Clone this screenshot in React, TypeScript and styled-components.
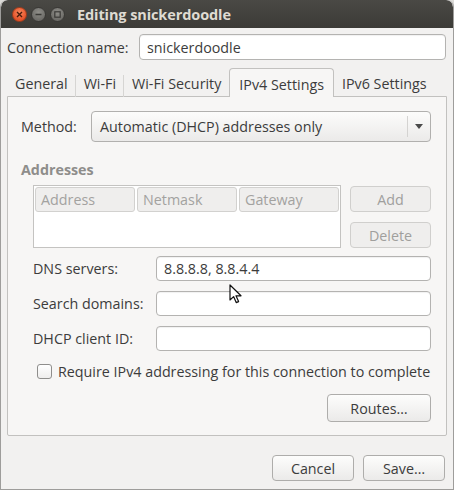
import React from 'react';
import styled, { createGlobalStyle } from 'styled-components';

const GlobalStyle = createGlobalStyle`
  html, body {
    margin: 0;
    padding: 0;
    background: #dcdbd8;
  }
  body {
    font-family: 'Open Sans', 'Noto Sans', sans-serif;
    font-size: 14.3px;
    color: #3c3c3c;
  }
`;

const Window = styled.div`
  position: relative;
  width: 454px;
  height: 490px;
  box-sizing: border-box;
  display: flex;
  flex-direction: column;
  background: #f2f1f0;
  border: 1px solid #9e9d9b;
  border-top: none;
  border-radius: 7px 7px 0 0;
  overflow: hidden;
`;

const TitleBar = styled.div`
  height: 28px;
  flex: none;
  display: flex;
  align-items: center;
  padding-left: 11px;
  background: linear-gradient(#4a4945, #3c3b37);
  border-radius: 7px 7px 0 0;
`;

const WinButton = styled.span<{ $kind: 'close' | 'other' }>`
  width: 15px;
  height: 15px;
  border-radius: 50%;
  margin-right: 4px;
  display: flex;
  align-items: center;
  justify-content: center;
  box-sizing: border-box;
  border: 1px solid ${p => (p.$kind === 'close' ? '#a33d1c' : '#3a3936')};
  background: ${p =>
    p.$kind === 'close'
      ? 'radial-gradient(circle at 50% 35%, #f7875c, #e5522a 70%)'
      : 'radial-gradient(circle at 50% 35%, #8f8e89, #6d6c68 70%)'};
`;

const Title = styled.span`
  margin-left: 8px;
  font-family: 'Open Sans', sans-serif;
  font-weight: 700;
  font-size: 14.5px;
  color: #dfdbd2;
  letter-spacing: -0.1px;
`;

const Body = styled.div`
  flex: 1;
  display: flex;
  flex-direction: column;
  padding: 6px 6px 0 6px;
`;

const NameRow = styled.div`
  display: flex;
  align-items: center;
  height: 26px;
  padding-right: 1px;
`;

const NameLabel = styled.span`
  width: 132px;
  flex: none;
`;

const Entry = styled.div<{ $h?: number }>`
  flex: 1;
  height: ${p => p.$h ?? 25}px;
  box-sizing: border-box;
  display: flex;
  align-items: center;
  padding-left: 7px;
  background: #ffffff;
  border: 1px solid #b4b3b1;
  border-radius: 4px;
  box-shadow: inset 0 1px 1px rgba(0, 0, 0, 0.06);
`;

const Notebook = styled.div`
  margin-top: 8px;
  display: flex;
  flex-direction: column;
`;

const TabStrip = styled.div`
  display: flex;
  height: 29px;
  margin-bottom: -1px;
  position: relative;
  z-index: 1;
`;

const Tab = styled.div<{ $active?: boolean; $divider?: boolean }>`
  display: flex;
  align-items: center;
  padding: 2px 8px 0 8px;
  position: relative;
  box-sizing: border-box;
  ${p =>
    p.$active
      ? `
    background: #f7f6f5;
    border: 1px solid #c2c1bf;
    border-bottom: none;
    border-radius: 4px 4px 0 0;
    padding: 2px 9px 0 9px;
  `
      : ''}
  ${p =>
    p.$divider
      ? `
    &::after {
      content: '';
      position: absolute;
      right: 0;
      top: 7px;
      bottom: 0;
      width: 1px;
      background: #d6d5d3;
    }
  `
      : ''}
`;

const Panel = styled.div`
  height: 340px;
  box-sizing: border-box;
  background: #f7f6f5;
  border: 1px solid #c2c1bf;
  border-radius: 0 0 2px 2px;
  padding: 14px 15px 0 13px;
  display: flex;
  flex-direction: column;
`;

const MethodRow = styled.div`
  display: flex;
  align-items: center;
`;

const MethodLabel = styled.span`
  width: 70px;
  flex: none;
`;

const Combo = styled.div`
  flex: 1;
  height: 31px;
  box-sizing: border-box;
  display: flex;
  align-items: center;
  padding-left: 8px;
  border: 1px solid #b1b0ae;
  border-radius: 4px;
  background: linear-gradient(#fcfcfb, #ebeae9);
`;

const ComboText = styled.span`
  flex: 1;
`;

const ComboArrow = styled.span`
  width: 22px;
  height: 21px;
  display: flex;
  align-items: center;
  justify-content: center;
  border-left: 1px solid #d4d3d1;
`;

const SectionTitle = styled.div`
  margin-top: 18px;
  font-weight: 700;
  color: #8e8d8b;
`;

const Indented = styled.div`
  padding-left: 12px;
  display: flex;
  flex-direction: column;
`;

const AddressBlock = styled.div`
  margin-top: 6px;
  display: flex;
  gap: 9px;
`;

const Table = styled.div`
  width: 308px;
  height: 63px;
  box-sizing: border-box;
  background: #ffffff;
  border: 1px solid #c4c3c1;
  padding: 1px;
`;

const HeaderRow = styled.div`
  display: flex;
  gap: 2px;
`;

const HeaderCell = styled.div`
  flex: 1;
  height: 25px;
  box-sizing: border-box;
  display: flex;
  align-items: center;
  padding-left: 5px;
  background: #efeeed;
  border: 1px solid #d2d1cf;
  border-radius: 3px;
  color: #a3a2a0;
`;

const SideButtons = styled.div`
  flex: 1;
  display: flex;
  flex-direction: column;
  gap: 10px;
  padding-top: 1px;
`;

const PushButton = styled.div<{ $disabled?: boolean; $w?: number; $h?: number }>`
  width: ${p => (p.$w ? `${p.$w}px` : 'auto')};
  height: ${p => p.$h ?? 26}px;
  box-sizing: border-box;
  display: flex;
  align-items: center;
  justify-content: center;
  border-radius: 4px;
  border: 1px solid ${p => (p.$disabled ? '#d0cfcd' : '#aeadab')};
  background: ${p =>
    p.$disabled ? '#efeeed' : 'linear-gradient(#fdfdfc, #ebeae9)'};
  color: ${p => (p.$disabled ? '#a09f9d' : '#3c3c3c')};
`;

const FieldRow = styled.div<{ $first?: boolean }>`
  margin-top: ${p => (p.$first ? 8 : 10)}px;
  display: flex;
  align-items: center;
`;

const FieldLabel = styled.span`
  width: 123px;
  flex: none;
`;

const CheckRow = styled.div`
  margin-top: 11px;
  display: flex;
  align-items: center;
  padding-left: 4px;
`;

const CheckBox = styled.span`
  width: 15px;
  height: 15px;
  box-sizing: border-box;
  border: 1px solid #8f8e8c;
  border-radius: 3px;
  background: linear-gradient(#ffffff, #efeeed);
  margin-right: 6px;
`;

const RoutesRow = styled.div`
  margin-top: 13px;
  display: flex;
  justify-content: flex-end;
`;

const DialogButtons = styled.div`
  margin-top: 19px;
  display: flex;
  justify-content: flex-end;
  gap: 9px;
  padding-right: 2px;
`;

const Pointer = styled.svg`
  position: absolute;
  left: 228px;
  top: 284px;
`;

const fields = ['DNS servers:', 'Search domains:', 'DHCP client ID:'];
const fieldValues: Record<string, string> = { 'DNS servers:': '8.8.8.8, 8.8.4.4' };

function App(): JSX.Element {
  return (
    <>
      <GlobalStyle />
      <Window>
        <TitleBar>
          <WinButton $kind="close">
            <svg width="7" height="7" viewBox="0 0 7 7">
              <path d="M1 1L6 6M6 1L1 6" stroke="#4a1c0c" strokeWidth="1.4" />
            </svg>
          </WinButton>
          <WinButton $kind="other">
            <svg width="7" height="7" viewBox="0 0 7 7">
              <path d="M0.5 3.5H6.5" stroke="#3b3a37" strokeWidth="1.6" />
            </svg>
          </WinButton>
          <WinButton $kind="other">
            <svg width="7" height="7" viewBox="0 0 7 7">
              <rect x="0.8" y="0.8" width="5.4" height="5.4" fill="none" stroke="#3b3a37" strokeWidth="1.2" />
            </svg>
          </WinButton>
          <Title>Editing snickerdoodle</Title>
        </TitleBar>

        <Body>
          <NameRow>
            <NameLabel>Connection name:</NameLabel>
            <Entry $h={26}>snickerdoodle</Entry>
          </NameRow>

          <Notebook>
            <TabStrip>
              <Tab $divider>General</Tab>
              <Tab $divider>Wi-Fi</Tab>
              <Tab>Wi-Fi Security</Tab>
              <Tab $active>IPv4 Settings</Tab>
              <Tab>IPv6 Settings</Tab>
            </TabStrip>
            <Panel>
              <MethodRow>
                <MethodLabel>Method:</MethodLabel>
                <Combo>
                  <ComboText>Automatic (DHCP) addresses only</ComboText>
                  <ComboArrow>
                    <svg width="8" height="5" viewBox="0 0 8 5">
                      <path d="M0 0H8L4 5Z" fill="#4a4a4a" />
                    </svg>
                  </ComboArrow>
                </Combo>
              </MethodRow>

              <SectionTitle>Addresses</SectionTitle>
              <Indented>
                <AddressBlock>
                  <Table>
                    <HeaderRow>
                      <HeaderCell>Address</HeaderCell>
                      <HeaderCell>Netmask</HeaderCell>
                      <HeaderCell>Gateway</HeaderCell>
                    </HeaderRow>
                  </Table>
                  <SideButtons>
                    <PushButton $disabled>Add</PushButton>
                    <PushButton $disabled>Delete</PushButton>
                  </SideButtons>
                </AddressBlock>

                {fields.map((f, i) => (
                  <FieldRow key={f} $first={i === 0}>
                    <FieldLabel>{f}</FieldLabel>
                    <Entry>{fieldValues[f] ?? ''}</Entry>
                  </FieldRow>
                ))}
              </Indented>

              <Indented>
                <CheckRow>
                  <CheckBox />
                  Require IPv4 addressing for this connection to complete
                </CheckRow>
                <RoutesRow>
                  <PushButton $w={104} $h={28}>Routes…</PushButton>
                </RoutesRow>
              </Indented>
            </Panel>
          </Notebook>

          <DialogButtons>
            <PushButton $w={82}>Cancel</PushButton>
            <PushButton $w={82}>Save…</PushButton>
          </DialogButtons>
        </Body>

        <Pointer width="13" height="20" viewBox="0 0 13 20">
          <path
            d="M1 1V16L4.6 12.6L7.2 18.6L9.6 17.6L7 11.8H12Z"
            fill="#ffffff"
            stroke="#111111"
            strokeWidth="1.2"
            strokeLinejoin="round"
          />
        </Pointer>
      </Window>
    </>
  );
}

export default App;
